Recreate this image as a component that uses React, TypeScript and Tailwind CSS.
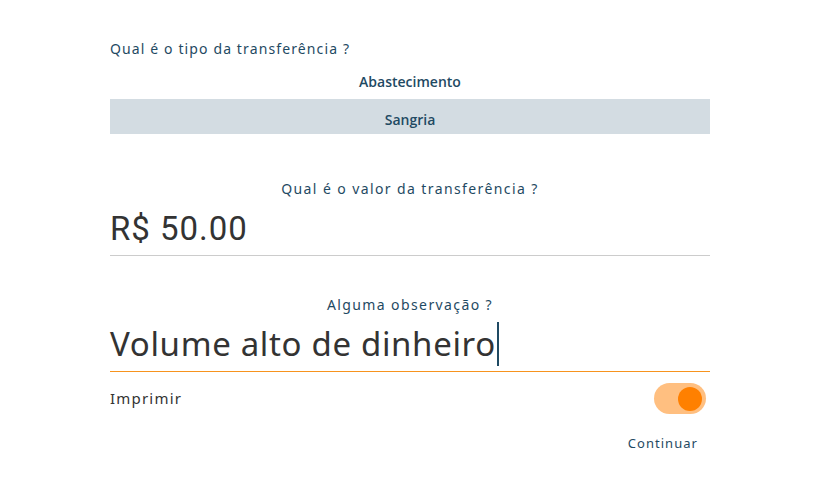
import React, { useState } from 'react';

const label = "font-['Noto_Sans',sans-serif] text-[14px] tracking-[0.1em] text-[#1f4a63]";

const App: React.FC = () => {
  const [tipo, setTipo] = useState('Sangria');
  const [imprimir, setImprimir] = useState(true);

  return (
    <div className="w-[816px] h-[492px] bg-white">
      <div className="ml-[110px] w-[600px] pt-[38px] flex flex-col">
        <p className={`${label} tracking-[0.08em]`}>Qual é o tipo da transferência ?</p>

        <div className="mt-[5px] flex flex-col">
          {['Abastecimento', 'Sangria'].map(t => (
            <button
              key={t}
              onClick={() => setTipo(t)}
              className={`h-[35px] flex items-center justify-center font-['Open_Sans',sans-serif] font-semibold text-[14px] text-[#1f4a63] ${tipo === t ? 'bg-[#d3dce2] pt-[6px]' : 'bg-white'}`}
            >
              {t}
            </button>
          ))}
        </div>

        <p className={`${label} mt-[44px] text-center`}>Qual é o valor da transferência ?</p>
        <div className="h-[56px] pt-[10px]">
          <span className="font-['Roboto',sans-serif] text-[33px] leading-[40px] tracking-[0.03em] text-[#333333]">R$ 50.00</span>
        </div>
        <div className="h-px bg-[#cccccc]" />

        <p className={`${label} mt-[38px] text-center`}>Alguma observação ?</p>
        <div className="h-[56px] pt-[7px] flex items-start">
          <span className="font-['Noto_Sans',sans-serif] text-[33px] leading-[44px] tracking-[0.02em] text-[#333333]">Volume alto de dinheiro</span>
          <span className="w-[2px] h-[44px] bg-[#1f4a63] ml-[1px]" />
        </div>
        <div className="h-px bg-[#f7931e]" />

        <div className="mt-[11px] flex items-center justify-between">
          <span className="font-['Noto_Sans',sans-serif] text-[15px] tracking-[0.08em] text-[#333333]">Imprimir</span>
          <button
            onClick={() => setImprimir(!imprimir)}
            className={`w-[52px] h-[31px] rounded-full flex items-center px-[4px] mr-[4px] ${imprimir ? 'bg-[#ffbf80] justify-end' : 'bg-[#dddddd] justify-start'}`}
          >
            <span className={`w-[24px] h-[24px] rounded-full ${imprimir ? 'bg-[#ff8000]' : 'bg-white'}`} />
          </button>
        </div>

        <div className="mt-[20px] flex justify-end">
          <button className="mr-[12px] font-['Noto_Sans',sans-serif] text-[13px] tracking-[0.08em] text-[#1f4a63]">Continuar</button>
        </div>
      </div>
    </div>
  );
};

export default App;
